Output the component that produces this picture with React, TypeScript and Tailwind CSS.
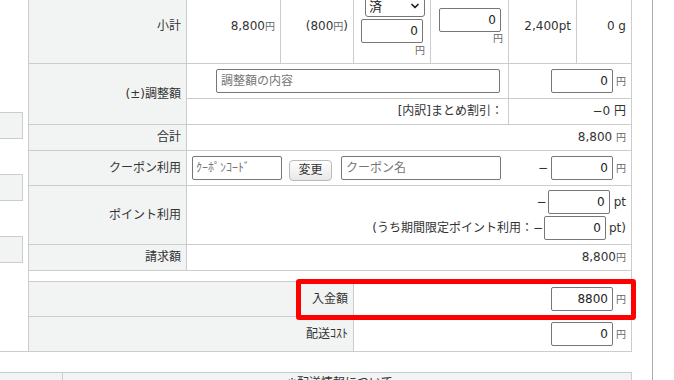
import { ChevronDown } from 'lucide-react';

// 注文金額テーブル（右側が切れた状態）

function Yen({ className = '' }: { className?: string }) {
  return <span className={`text-[10px] text-[#666] ${className}`}>円</span>;
}

function NumBox({ value, className = '' }: { value: string; className?: string }) {
  return (
    <input
      readOnly
      value={value}
      className={`w-[62px] h-[24px] border border-[#767676] rounded-[2px] bg-white text-right pr-[4px] text-[12px] text-[#222] outline-none ${className}`}
    />
  );
}

const label = 'bg-[#f2f3f3] flex items-center justify-end pr-[5px] text-[#333]';
const cell = 'bg-white flex items-center justify-end pr-[5px]';

export default function App() {
  return (
    <div className="w-[674px] h-[380px] overflow-hidden bg-white flex font-['DejaVu_Sans','Noto_Sans_CJK_JP',sans-serif] text-[12px] leading-[17px] text-[#333]">
      <div className="relative w-[652px] shrink-0">
        <div className="-mt-[12px] flex">
          {/* 左側のボタン列 */}
          <div className="w-[28px] border-b border-[#ccc] pt-[124px] pr-[5px] flex flex-col gap-[35px]">
            <div className="-ml-[4px] w-[27px] h-[27px] border border-[#ccc] bg-[#f2f3f3]" />
            <div className="-ml-[4px] w-[27px] h-[27px] border border-[#ccc] bg-[#f2f3f3]" />
            <div className="-ml-[4px] w-[27px] h-[27px] border border-[#ccc] bg-[#f2f3f3]" />
          </div>

          {/* 金額テーブル */}
          <div className="grid grid-cols-[157px_93px_72px_76px_77px_67px_54px] grid-rows-[74px_34px_25px_25px_34px_58px_25px_10px_34px_34px] gap-px bg-[#ccc] border border-[#ccc]">
            {/* 小計 */}
            <div className={label}>小計</div>
            <div className={cell}>
              <span>8,800<Yen /></span>
            </div>
            <div className={cell}>
              <span>(800<Yen />)</span>
            </div>
            <div className="bg-white flex flex-col items-end justify-center pr-[5px]">
              <div className="w-[60px] h-[21px] border border-[#767676] rounded-[3px] flex items-center justify-between pl-[3px] pr-[3px] text-[13px] text-[#222]">
                <span>済</span>
                <ChevronDown size={12} strokeWidth={3.5} className="text-[#222]" />
              </div>
              <NumBox value="0" className="mt-[2px] mr-[2px]" />
              <Yen className="leading-[12px] mt-[2px]" />
            </div>
            <div className="bg-white flex flex-col items-end justify-center gap-[1px] pr-[5px]">
              <NumBox value="0" className="mr-[2px]" />
              <Yen className="leading-[12px]" />
            </div>
            <div className={cell}>2,400pt</div>
            <div className={cell}>0 g</div>

            {/* 調整額 */}
            <div className={`${label} row-span-2`}>(±)調整額</div>
            <div className={`${cell} col-span-4 pr-[8px]`}>
              <input
                readOnly
                placeholder="調整額の内容"
                className="w-[284px] h-[24px] border border-[#767676] rounded-[2px] bg-white px-[4px] text-[12px] placeholder:text-[#757575] outline-none"
              />
            </div>
            <div className={`${cell} col-span-2 gap-[3px]`}>
              <NumBox value="0" />
              <Yen />
            </div>
            <div className={`${cell} col-span-4`}>[内訳]まとめ割引：</div>
            <div className={`${cell} col-span-2`}>−0 円</div>

            {/* 合計 */}
            <div className={label}>合計</div>
            <div className={`${cell} col-span-6`}>
              <span>8,800 <Yen /></span>
            </div>

            {/* クーポン利用 */}
            <div className={label}>クーポン利用</div>
            <div className="bg-white col-span-6 flex items-center pl-[5px] pr-[5px]">
              <input
                readOnly
                placeholder="ｸｰﾎﾟﾝｺｰﾄﾞ"
                className="w-[90px] h-[24px] border border-[#767676] rounded-[2px] bg-white px-[3px] text-[12px] placeholder:text-[#757575] outline-none"
              />
              <button className="ml-[7px] mt-[4px] w-[43px] h-[21px] border border-[#bbb] rounded-[4px] bg-linear-to-b from-white to-[#e8e8e8] text-[12px] text-[#333] leading-none">
                変更
              </button>
              <input
                readOnly
                placeholder="クーポン名"
                className="ml-[9px] w-[160px] h-[24px] border border-[#767676] rounded-[2px] bg-white px-[4px] text-[12px] placeholder:text-[#757575] outline-none"
              />
              <div className="ml-auto flex items-center gap-[3px]">
                <span>−</span>
                <NumBox value="0" />
                <Yen />
              </div>
            </div>

            {/* ポイント利用 */}
            <div className={label}>ポイント利用</div>
            <div className="bg-white col-span-6 flex flex-col items-end justify-center gap-[2px] pr-[5px]">
              <div className="flex items-center">
                <span>−</span>
                <NumBox value="0" className="h-[22px] ml-[1px]" />
                <span className="ml-[4px]">pt</span>
              </div>
              <div className="flex items-center">
                <span>(うち期間限定ポイント利用：−</span>
                <NumBox value="0" className="h-[22px] ml-[1px]" />
                <span className="ml-[3px]">pt)</span>
              </div>
            </div>

            {/* 請求額 */}
            <div className={label}>請求額</div>
            <div className={`${cell} col-span-6`}>
              <span>8,800<Yen /></span>
            </div>

            {/* 区切り */}
            <div className="bg-white col-span-7" />

            {/* 入金額 */}
            <div className={`${label} col-span-3`}>入金額</div>
            <div className={`${cell} col-span-4 gap-[3px]`}>
              <NumBox value="8800" />
              <Yen />
            </div>

            {/* 配送ｺｽﾄ */}
            <div className={`${label} col-span-3`}>配送ｺｽﾄ</div>
            <div className={`${cell} col-span-4 gap-[3px]`}>
              <NumBox value="0" />
              <Yen />
            </div>
          </div>
        </div>

        {/* 下のテーブル */}
        <div className="mt-[20px] w-[632px] h-[40px] flex border-t border-r border-[#ccc]">
          <div className="w-[63px] bg-[#f2f3f3] border-r border-[#ccc]" />
          <div className="flex-1 bg-[#f2f3f3] pl-[224px] pt-[2px]">※配送情報について</div>
        </div>

        {/* 強調枠 */}
        <div className="absolute left-[296px] top-[279px] w-[340px] h-[41px] border-[5px] border-[#ff0000] rounded-[3px]" />
      </div>
      <div className="flex-1 border-l border-[#aaa]" />
    </div>
  );
}
